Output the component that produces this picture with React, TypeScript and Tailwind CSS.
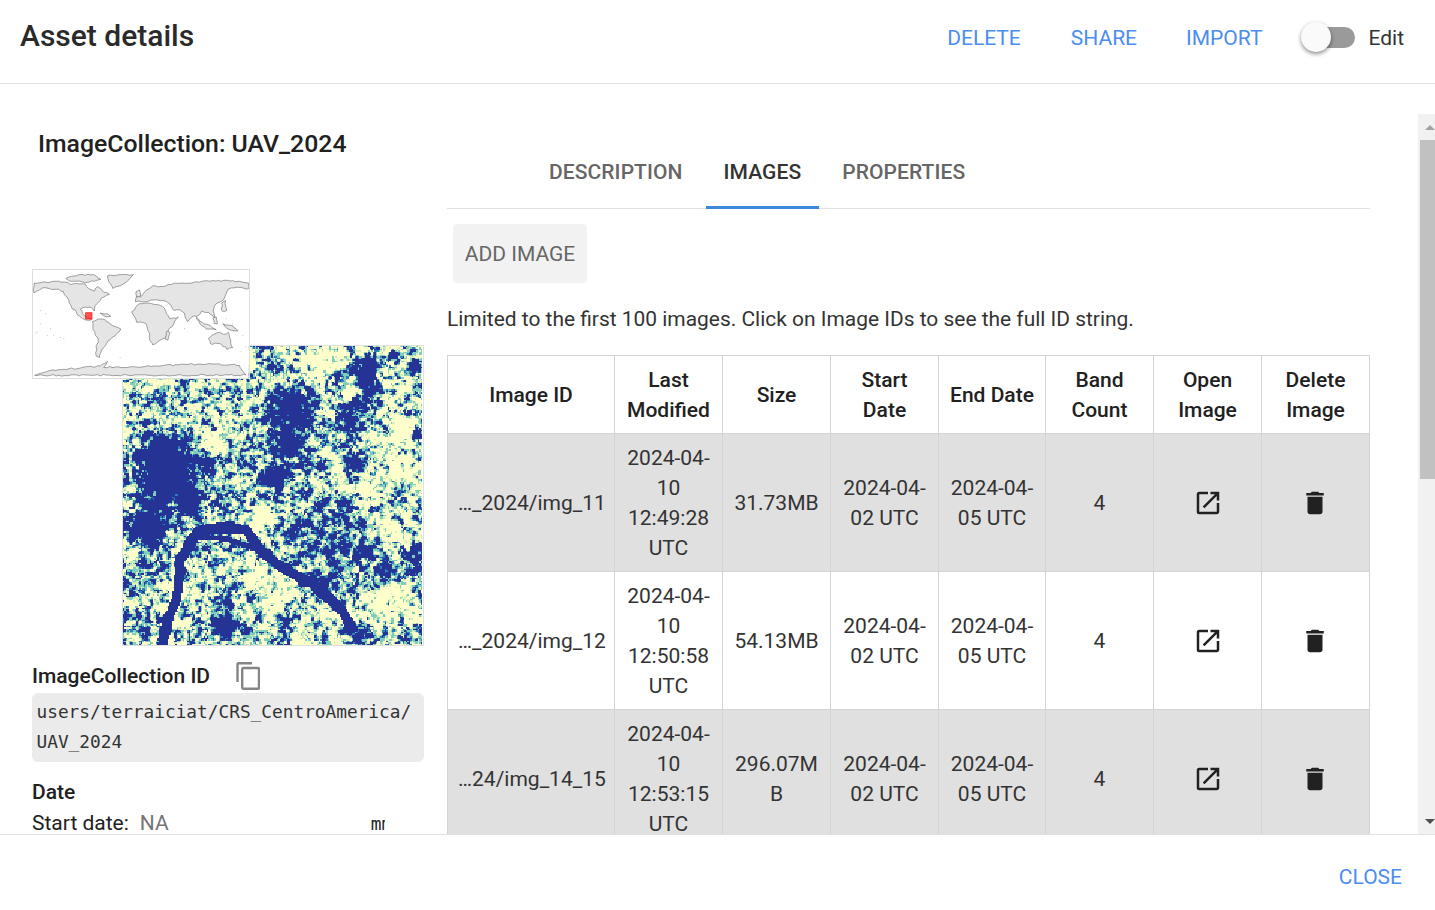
import React, { useMemo } from "react";
import { MdDelete, MdOutlineOpenInNew } from "react-icons/md";

const hash = (x: number, y: number) => {
  const s = Math.sin(x * 127.1 + y * 311.7) * 43758.5453;
  return s - Math.floor(s);
};
const smooth = (t: number) => t * t * (3 - 2 * t);
const noise = (x: number, y: number) => {
  const ix = Math.floor(x), iy = Math.floor(y);
  const fx = smooth(x - ix), fy = smooth(y - iy);
  const a = hash(ix, iy), b = hash(ix + 1, iy), c = hash(ix, iy + 1), d = hash(ix + 1, iy + 1);
  return a + (b - a) * fx + (c - a) * fy + (a - b - c + d) * fx * fy;
};

const blobs: number[][] = [
  [820, 440, 60, 1.3], [810, 550, 50, 1], [430, 570, 55, 1.2], [430, 660, 85, 1.1], [520, 720, 36, 1.2],
  [370, 800, 70, 1.2], [760, 650, 36, 1.1], [530, 610, 45, 0.7], [1040, 350, 32, 1.1], [1040, 410, 28, 1],
  [990, 450, 26, 1], [1000, 610, 26, 1.2], [1190, 320, 20, 1.1], [1130, 290, 16, 1.2], [1050, 300, 20, 1.1],
  [985, 510, 18, 1.1], [1085, 495, 24, 0.7], [950, 350, 16, 1.1], [905, 615, 14, 1.2], [1190, 525, 16, 1.1],
  [900, 850, 110, 0.35], [1020, 870, 40, 0.6], [1185, 880, 38, 1], [1100, 940, 32, 1], [350, 950, 70, 0.3],
  [620, 1090, 34, 1.1], [800, 1090, 45, 0.35], [610, 1010, 22, 0.8], [1020, 1120, 32, 1], [360, 1080, 60, 0.2],
  [1130, 700, 30, 0.3], [960, 745, 45, 0.45], [640, 600, 60, 0.2],
];
const pale: number[][] = [
  [1130, 530, 55, 1], [590, 550, 24, 1], [340, 735, 26, 1], [700, 950, 28, 1], [1110, 1010, 48, 1],
  [900, 310, 55, 0.8], [1000, 385, 28, 0.8], [940, 600, 42, 0.6], [1060, 680, 48, 0.7], [340, 865, 28, 0.7],
  [800, 1000, 65, 0.45], [1150, 650, 32, 0.6], [730, 780, 32, 0.7], [1130, 830, 42, 0.5],
];
const river: number[][] = [
  [430, 1145], [445, 1075], [470, 1010], [480, 900], [530, 815], [600, 800], [680, 810], [730, 880], [800, 930], [880, 970], [960, 1040], [1000, 1100],
];
const river2: number[][] = [[530, 830], [620, 835], [690, 860], [750, 875]];

const segDist = (px: number, py: number, p: number[][]) => {
  let best = 1e9;
  for (let i = 0; i < p.length - 1; i++) {
    const [ax, ay] = p[i], [bx, by] = p[i + 1];
    const dx = bx - ax, dy = by - ay;
    const t = Math.max(0, Math.min(1, ((px - ax) * dx + (py - ay) * dy) / (dx * dx + dy * dy)));
    best = Math.min(best, Math.hypot(px - ax - t * dx, py - ay - t * dy));
  }
  return best;
};

const COLORS = ["#ffffcc", "#d4eebb", "#7fcdbb", "#2c7fb8", "#253494"];

function Thumbnail() {
  const paths = useMemo(() => {
    const N = 200;
    const out = COLORS.map(() => "");
    for (let y = 0; y < N; y++) {
      let runStart = 0, runC = -1;
      for (let x = 0; x <= N; x++) {
        let c = -1;
        if (x < N) {
          const zx = 310 + (x / N) * 900, zy = 260 + (y / N) * 895;
          let v =
            0.3 * noise(x / 5, y / 5) + 0.4 * noise(x / 2.3 + 9, y / 2.3 + 5) + 0.3 * noise(x / 1.1 + 3, y / 1.1 + 8);
          let g = 0;
          for (const [bx, by, r, w] of blobs) g += w * Math.exp(-((zx - bx) ** 2 + (zy - by) ** 2) / (r * r));
          for (const [bx, by, r, w] of pale) g -= w * 0.8 * Math.exp(-((zx - bx) ** 2 + (zy - by) ** 2) / (r * r));
          v += g * 0.36;
          if (segDist(zx, zy, river) < 12 + 9 * noise(x / 5, y / 5)) v = 1;
          if (segDist(zx, zy, river2) < 8) v = Math.max(v, 0.7);
          c = v > 0.62 ? 4 : v > 0.585 ? 3 : v > 0.5 ? 2 : v > 0.46 ? 1 : 0;
        }
        if (c !== runC) {
          if (runC >= 0) out[runC] += `M${runStart} ${y}H${x}V${y + 1}H${runStart}Z`;
          runStart = x;
          runC = c;
        }
      }
    }
    return out;
  }, []);
  return (
    <svg viewBox="0 0 200 200" className="block w-[299px] h-[299px]" shapeRendering="crispEdges">
      {paths.map((d, i) => (
        <path key={i} d={d} fill={COLORS[i]} />
      ))}
    </svg>
  );
}

const roughen = (s: string, amp: number) => {
  const p = s.split(" ").map((q) => q.split(",").map(Number));
  const out: string[] = [];
  p.forEach((a, i) => {
    const b = p[(i + 1) % p.length];
    const len = Math.hypot(b[0] - a[0], b[1] - a[1]);
    const n = Math.max(1, Math.round(len / 9));
    for (let k = 0; k < n; k++) {
      const t = k / n;
      const x = a[0] + (b[0] - a[0]) * t, y = a[1] + (b[1] - a[1]) * t;
      const e = k === 0 ? 0 : amp;
      out.push(`${(x + (hash(x, y) - 0.5) * e).toFixed(1)},${(y + (hash(y, x) - 0.5) * e).toFixed(1)}`);
    }
  });
  return out.join(" ");
};

const land = [
  "40,68 62,66 100,62 132,64 150,72 175,70 195,70 205,84 222,92 232,78 246,90 268,102 250,110 240,120 232,128 224,136 222,152 212,140 194,140 180,146 186,160 200,170 214,178 206,180 186,174 170,162 152,136 140,110 128,92 106,86 86,84 66,82 40,97",
  "136,54 176,42 220,42 242,56 222,62 196,66 170,62 150,62",
  "262,46 300,42 340,42 326,58 300,76 278,84 266,64",
  "216,184 234,176 254,178 272,192 302,206 286,226 270,238 256,256 244,270 238,292 228,288 228,262 234,236 218,208",
  "335,154 352,134 376,128 412,132 428,138 440,160 450,176 476,170 462,190 446,208 438,232 420,240 398,254 388,232 386,214 378,190 350,186",
  "346,124 350,106 362,110 374,94 398,76 430,78 470,68 520,66 580,60 640,60 688,68 688,84 650,80 626,86 618,104 612,118 592,128 582,146 586,170 566,156 546,152 532,168 516,170 504,184 494,158 480,148 462,150 448,130 430,120 400,118 372,124",
  "566,236 580,224 600,216 612,222 626,216 634,240 640,262 622,268 606,252 572,250",
  "42,346 80,334 130,328 180,324 240,318 262,304 250,322 340,320 420,318 486,312 580,312 660,316 668,330 680,345",
  "442,212 450,216 444,240 436,236",
  "530,170 548,186 572,196 590,208 560,206 542,192",
  "610,190 640,196 656,212 626,206",
  "606,128 618,120 622,150 608,152",
  "348,94 358,88 362,106 350,110",
  "580,172 590,170 594,190 584,190",
  "240,158 262,160 272,168 250,166",
];
const dots = [
  [60, 150], [75, 160], [50, 215], [80, 225], [100, 225], [120, 232], [60, 190], [90, 205], [640, 190], [670, 225], [665, 275], [680, 260], [620, 175], [300, 292], [500, 180], [495, 205], [455, 215], [160, 150], [130, 235], [45, 218],
];

function WorldMap() {
  return (
    <svg viewBox="38 28 650 326" className="block w-[216px] h-[108px]">
      <rect x="38" y="28" width="650" height="326" fill="#fff" />
      {land.map((p, i) => (
        <polygon key={i} points={roughen(p, 5)} fill="#e5e5e5" stroke="#747474" strokeWidth="2" strokeLinejoin="round" />
      ))}
      {dots.map(([x, y], i) => (
        <circle key={i} cx={x} cy={y} r="1.6" fill="#bbb" />
      ))}
      <rect x="196" y="157" width="19" height="19" fill="#ff2a2a" stroke="#f00" strokeWidth="2" fillOpacity="0.8" />
    </svg>
  );
}

function CopyIcon() {
  return (
    <svg viewBox="0 0 24 28" className="w-[24px] h-[28px]" fill="none" stroke="#858585" strokeWidth="2.4">
      <path d="M1.5 20V2.2Q1.5 1.2 2.5 1.2H16" />
      <rect x="6.2" y="6" width="16.8" height="20.8" rx="1.2" />
    </svg>
  );
}

const rows = [
  { id: "…_2024/img_11", mod: "12:49:28", size: "31.73MB", bg: "bg-[#e0e0e0]" },
  { id: "…_2024/img_12", mod: "12:50:58", size: "54.13MB", bg: "bg-white" },
  { id: "…24/img_14_15", mod: "12:53:15", size: "296.07MB", bg: "bg-[#e0e0e0]" },
];
const headers = ["Image ID", "Last Modified", "Size", "Start Date", "End Date", "Band Count", "Open Image", "Delete Image"];
const widths = ["w-[167px]", "w-[108px]", "w-[108px]", "w-[108px]", "w-[107px]", "w-[108px]", "w-[108px]", "w-[108px]"];
const cell = "border border-[#d4d4d4] px-[10px] py-[7px] text-center align-middle break-words";

export default function App() {
  return (
    <div className="w-[1435px] h-[910px] flex flex-col overflow-hidden bg-white text-[21px] leading-[30px] text-[#212121] font-['Roboto',sans-serif]">
      <header className="h-[84px] shrink-0 flex items-center border-b border-[#e0e0e0] pl-[20px] pr-[31px] pb-[12px]">
        <h1 className="text-[30px] leading-[36px] font-medium flex-1 text-[#2a2a2a]">Asset details</h1>
        <div className="flex items-center mt-[4px]">
          <div className="flex items-center text-[#4b8df2]">
            <span className="mr-[50px]">DELETE</span>
            <span className="mr-[49px]">SHARE</span>
            <span className="mr-[41px]">IMPORT</span>
          </div>
          <div className="relative w-[52px] h-[21px] rounded-full bg-[#9a9a9a] mr-[13px]">
            <div className="absolute left-[-2px] top-[-5px] w-[30px] h-[30px] rounded-full bg-[#fafafa] shadow-[0_2px_4px_rgba(0,0,0,0.45)]" />
          </div>
          <span className="text-[#333]">Edit</span>
        </div>
      </header>

      <div className="flex-1 min-h-0 flex">
        <main className="flex-1 min-w-0 overflow-hidden flex">
          <section className="w-[392px] ml-[32px] shrink-0 overflow-hidden">
            <h2 className="ml-[6px] mt-[42px] text-[24.8px] leading-[36px] font-medium">ImageCollection: UAV_2024</h2>
            <div className="relative mt-[107px] h-[378px]">
              <div className="absolute left-0 top-0 border border-[#dedede] z-10">
                <WorldMap />
              </div>
              <div className="pt-[76px] pl-[90px]">
                <div className="border border-[#e0e0e0] w-[302px] h-[301px]">
                  <Thumbnail />
                </div>
              </div>
            </div>
            <div className="flex items-center h-[34px] mt-[12px] font-medium">
              <span>ImageCollection ID</span>
              <span className="ml-[26px]"><CopyIcon /></span>
            </div>
            <div className="h-[69px] rounded-[6px] bg-[#ebebeb] pl-[4.5px] pr-[5px] pt-[4px] text-[#333] font-['DejaVu_Sans_Mono',monospace] text-[17.8px] leading-[30px]">
              users/terraiciat/CRS_CentroAmerica/ UAV_2024
            </div>
            <div className="mt-[15px] font-medium">Date</div>
            <div className="flex items-center h-[32px]">
              <span>Start date:</span>
              <span className="ml-[11px] text-[#757575]">NA</span>
              <span className="ml-[202px] w-[14px] overflow-hidden text-[17.8px] whitespace-nowrap font-['DejaVu_Sans_Mono',monospace] translate-y-[1px]">mm</span>
            </div>
          </section>

          <section className="ml-[23px] w-[923px] shrink-0">
            <nav className="mt-[52px] h-[73px] border-b border-[#e0e0e0] flex pl-[84px] font-medium text-[#666] tracking-[0.08px]">
              <span className="px-[18px] h-full flex items-center mr-[5px]">DESCRIPTION</span>
              <span className="px-[18px] h-[73px] flex items-center pt-[2px] text-[#333] border-b-[3px] border-[#3b8ad9] mr-[5px]">IMAGES</span>
              <span className="px-[18px] h-full flex items-center">PROPERTIES</span>
            </nav>
            <button className="block mt-[15px] ml-[6px] h-[59px] w-[134px] rounded-[4px] bg-[#f2f2f2] text-[#666]">ADD IMAGE</button>
            <p className="mt-[21px] text-[20.95px] text-[#333]">Limited to the first 100 images. Click on Image IDs to see the full ID string.</p>
            <table className="mt-[21px] w-[923px] table-fixed border-collapse text-[#333]">
              <thead>
                <tr className="h-[78px] text-[#212121]">
                  {headers.map((h, i) => (
                    <th key={h} className={`${cell} ${widths[i]} font-medium`}>{h}</th>
                  ))}
                </tr>
              </thead>
              <tbody>
                {rows.map((r) => (
                  <tr key={r.id} className={`${r.bg} h-[138px]`}>
                    <td className={`${cell} whitespace-nowrap`}>{r.id}</td>
                    <td className={cell}>2024-04-10 {r.mod} UTC</td>
                    <td className={`${cell} break-all`}>{r.size}</td>
                    <td className={cell}>2024-04-02 UTC</td>
                    <td className={cell}>2024-04-05 UTC</td>
                    <td className={cell}>4</td>
                    <td className={cell}><MdOutlineOpenInNew className="mx-auto w-[30px] h-[30px] text-[#212121]" /></td>
                    <td className={cell}><MdDelete className="mx-auto w-[30px] h-[30px] -translate-x-[1px] text-[#212121]" /></td>
                  </tr>
                ))}
              </tbody>
            </table>
          </section>
        </main>

        <aside className="w-[17px] shrink-0 mt-[30px] bg-[#f1f1f1] flex flex-col items-end relative">
          <div className="h-[26px] w-full flex items-center pl-[7px] pt-[1px]">
            <div className="border-x-[5px] border-x-transparent border-b-[5px] border-b-[#a3a3a3]" />
          </div>
          <div className="h-[339px] w-[15px] bg-[#c1c1c1]" />
          <div className="absolute bottom-[10px] left-[7px] border-x-[5px] border-x-transparent border-t-[5px] border-t-[#505050]" />
        </aside>
      </div>

      <footer className="h-[76px] shrink-0 border-t border-[#e0e0e0] flex items-center justify-end pr-[33px] text-[#4b8df2] pt-[8px]">
        CLOSE
      </footer>
    </div>
  );
}
